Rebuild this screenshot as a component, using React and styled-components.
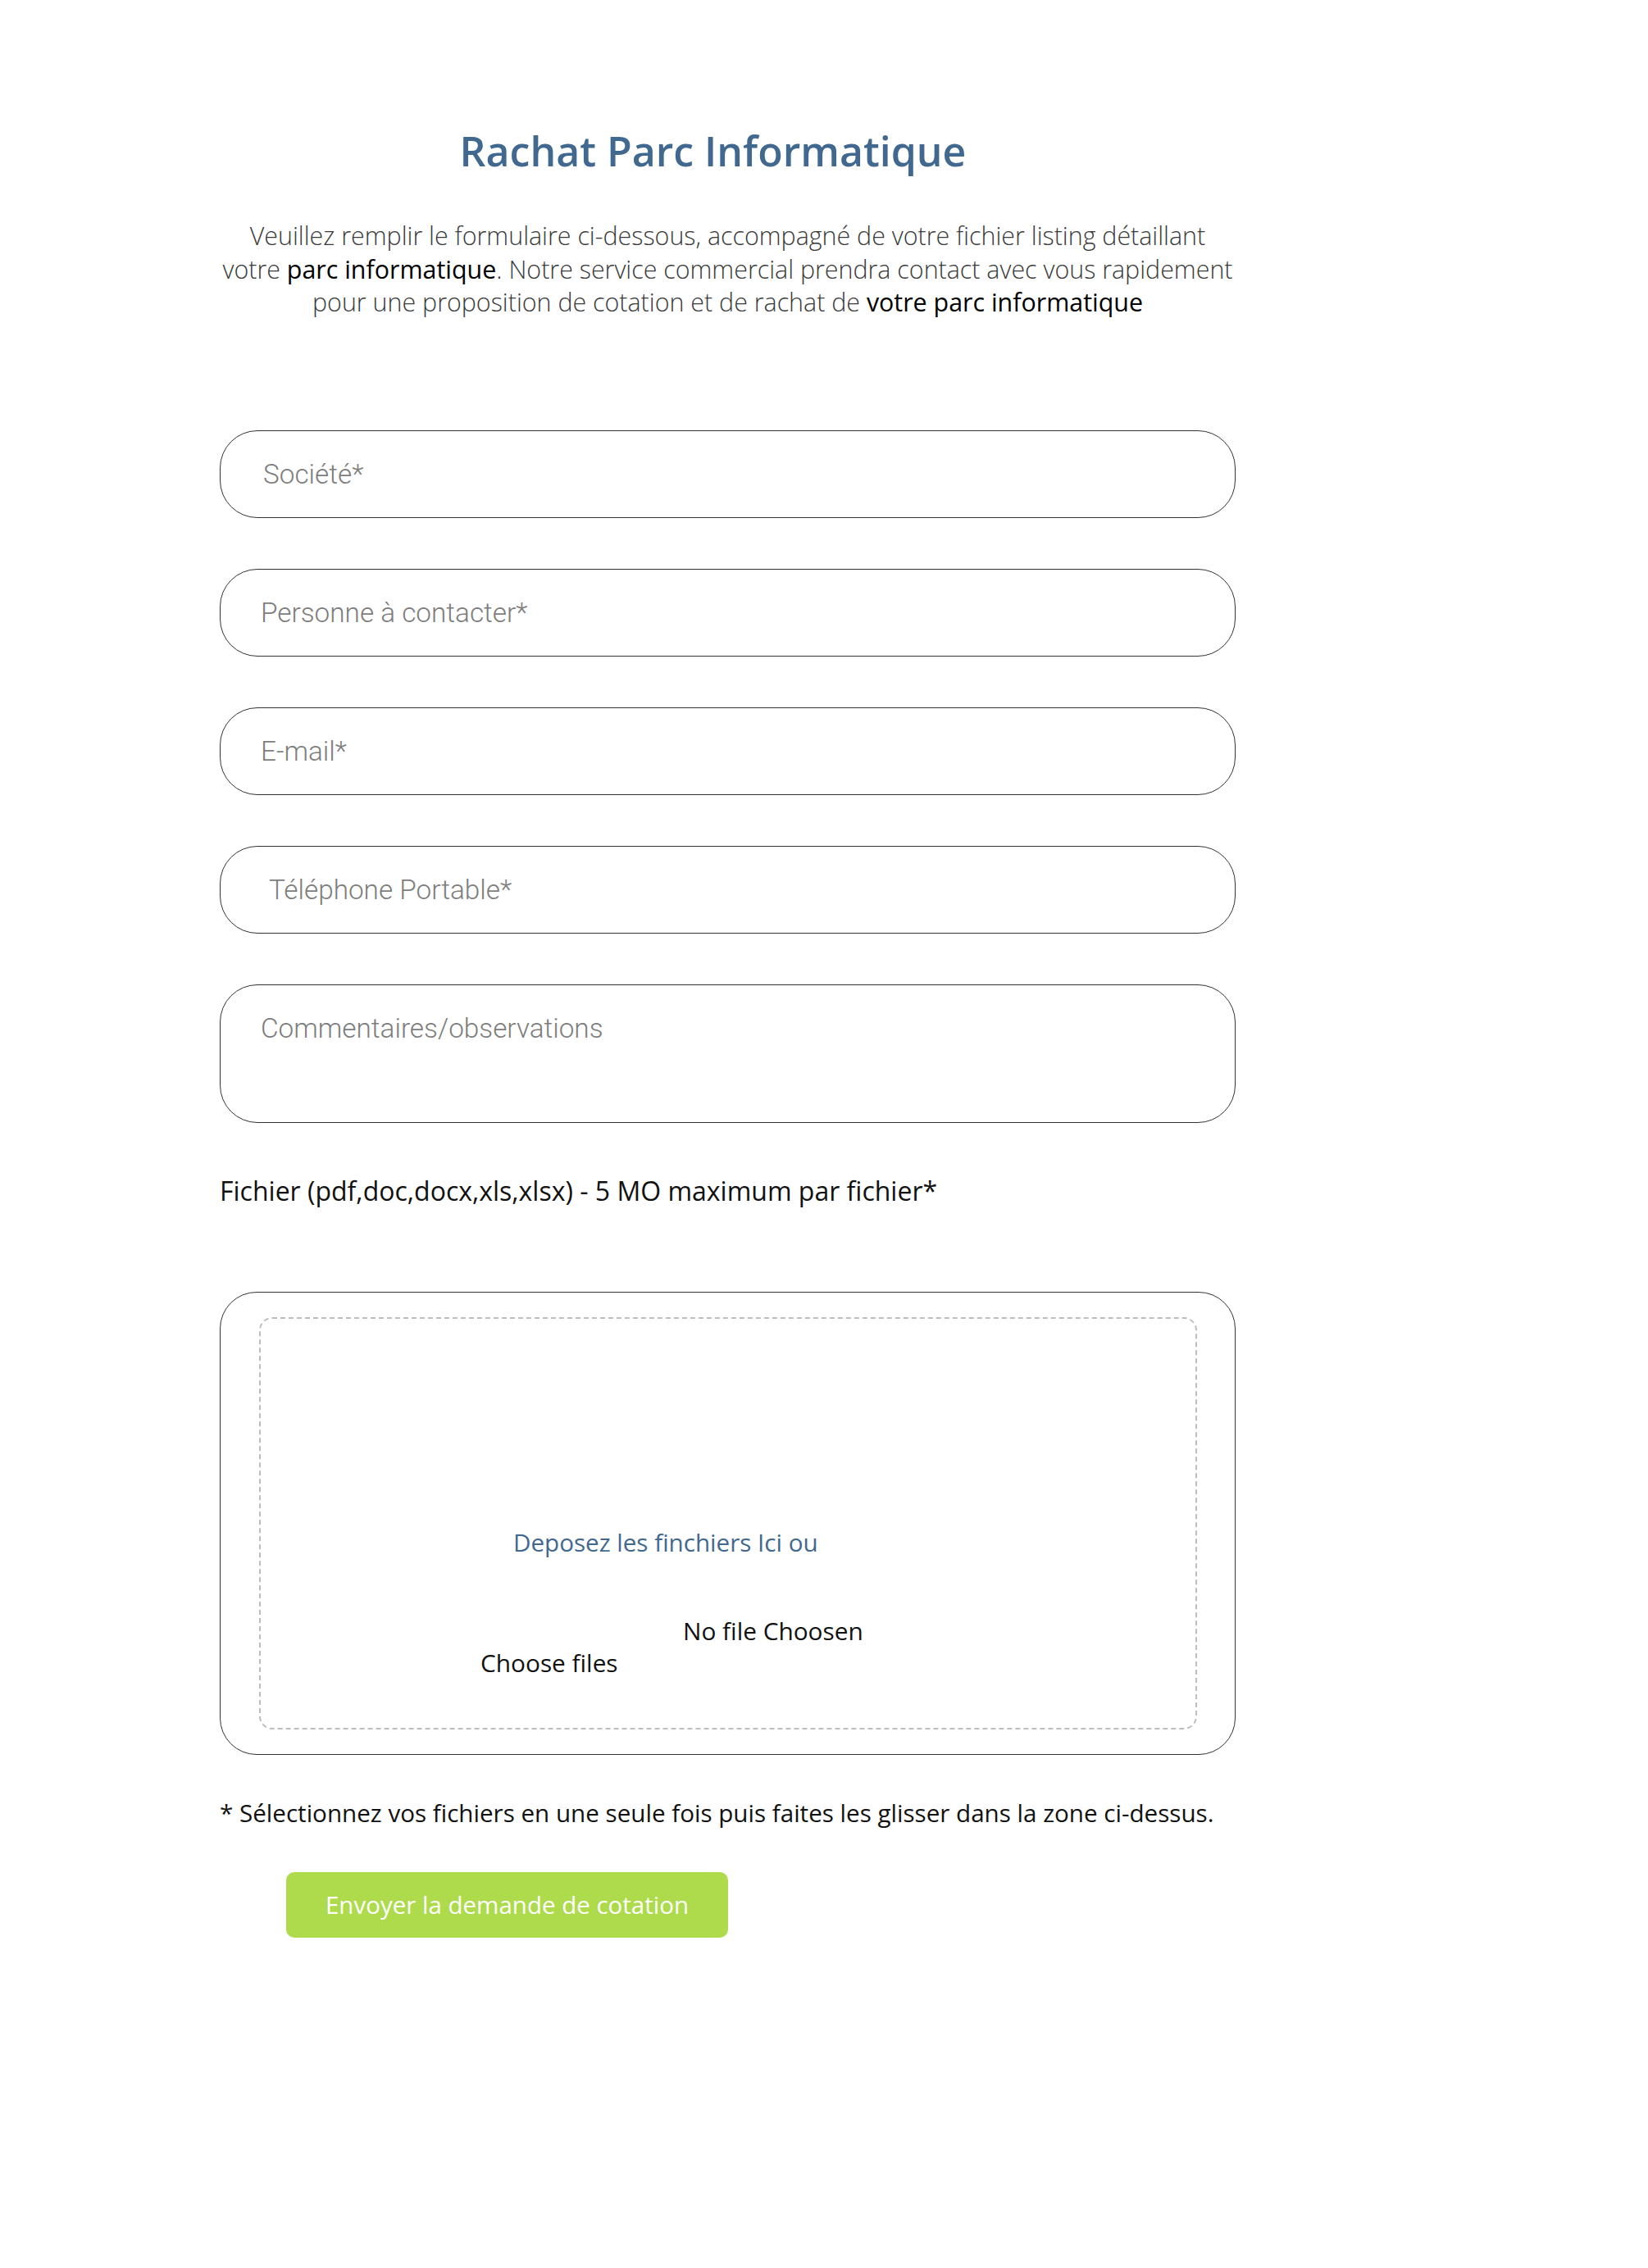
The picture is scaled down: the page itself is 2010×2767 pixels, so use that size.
import React from 'react';
import styled, { createGlobalStyle } from 'styled-components';

const Global = createGlobalStyle`
  html, body { margin: 0; padding: 0; background: #fff; }
  body { font-family: "Open Sans", "Liberation Sans", sans-serif; }
  * { box-sizing: border-box; }
`;

const Page = styled.div`
  width: 2010px;
  min-height: 2767px;
  padding: 154px 0 0 268px;
`;

const Column = styled.div`
  width: 1239px;
  display: flex;
  flex-direction: column;
`;

const Title = styled.h1`
  margin: 0;
  padding-right: 36px;
  font-size: 50px;
  font-weight: 600;
  line-height: 60px;
  color: #41698f;
  text-align: center;
`;

const Intro = styled.p`
  margin: 54px 0 0;
  font-size: 30.4px;
  font-weight: 300;
  line-height: 40.5px;
  color: #3a3a3a;
  text-align: center;
  white-space: nowrap;
  strong { font-weight: 400; color: #000; }
`;

const Form = styled.form`
  margin-top: 135px;
  display: flex;
  flex-direction: column;
  gap: 62px;
`;

const fieldBase = `
  width: 100%;
  border: 1px solid #333;
  border-radius: 46px;
  background: #fff;
  font-family: Roboto, "Liberation Sans", sans-serif;
  font-weight: 300;
  font-size: 33.3px;
  color: #333;
  outline: none;
  &::placeholder { color: #7d7d7d; opacity: 1; }
`;

const Input = styled.input`
  ${fieldBase}
  height: 107px;
  padding: 0 0 0 ${p => p.$indent}px;
`;

const TextArea = styled.textarea`
  ${fieldBase}
  height: 169px;
  padding: 33px 0 0 49px;
  line-height: 40px;
  resize: none;
`;

const Label = styled.div`
  margin-top: 63px;
  font-size: 32px;
  line-height: 40px;
  color: #111;
`;

const DropZone = styled.div`
  margin-top: 103px;
  height: 565px;
  border: 1px solid #333;
  border-radius: 45px;
  padding: 30px 46px 30px 47px;
  display: flex;
`;

const DashedArea = styled.div`
  flex: 1;
  border: 2px dashed #bdbdbd;
  border-radius: 16px;
  padding-top: 253px;
  display: flex;
  flex-direction: column;
  align-items: flex-start;
`;

const DropText = styled.div`
  margin-left: 308px;
  font-size: 29.6px;
  line-height: 40px;
  color: #41698f;
`;

const FileText = styled.div`
  margin-left: ${p => p.$left}px;
  margin-top: ${p => p.$top}px;
  font-size: 29.8px;
  line-height: 40px;
  color: #111;
`;

const Note = styled.div`
  margin-top: 51px;
  font-size: 29.6px;
  line-height: 40px;
  color: #111;
  white-space: nowrap;
`;

const SubmitButton = styled.button`
  margin: 52px 0 0 81px;
  align-self: flex-start;
  width: 539px;
  height: 80px;
  border: none;
  border-radius: 10px;
  background: #addb4b;
  color: #fff;
  font-family: "Open Sans", "Liberation Sans", sans-serif;
  font-size: 29.5px;
  font-weight: 400;
  cursor: pointer;
`;

export default function App() {
  return (
    <>
      <Global />
      <Page>
        <Column>
          <Title>Rachat Parc Informatique</Title>
          <Intro>
            Veuillez remplir le formulaire ci-dessous, accompagné de votre fichier listing détaillant
            <br />
            votre <strong>parc informatique</strong>. Notre service commercial prendra contact avec vous rapidement
            <br />
            pour une proposition de cotation et de rachat de <strong>votre parc informatique</strong>
          </Intro>
          <Form onSubmit={e => e.preventDefault()}>
            <Input $indent={52} placeholder="Société*" />
            <Input $indent={49} placeholder="Personne à contacter*" />
            <Input $indent={49} placeholder="E-mail*" />
            <Input $indent={59} placeholder="Téléphone Portable*" />
            <TextArea placeholder="Commentaires/observations" />
          </Form>
          <Label>Fichier (pdf,doc,docx,xls,xlsx) - 5 MO maximum par fichier*</Label>
          <DropZone>
            <DashedArea>
              <DropText>Deposez les finchiers Ici ou</DropText>
              <FileText $left={515} $top={68}>No file Choosen</FileText>
              <FileText $left={268} $top={-1}>Choose files</FileText>
            </DashedArea>
          </DropZone>
          <Note>* Sélectionnez vos fichiers en une seule fois puis faites les glisser dans la zone ci-dessus.</Note>
          <SubmitButton type="button">Envoyer la demande de cotation</SubmitButton>
        </Column>
      </Page>
    </>
  );
}
